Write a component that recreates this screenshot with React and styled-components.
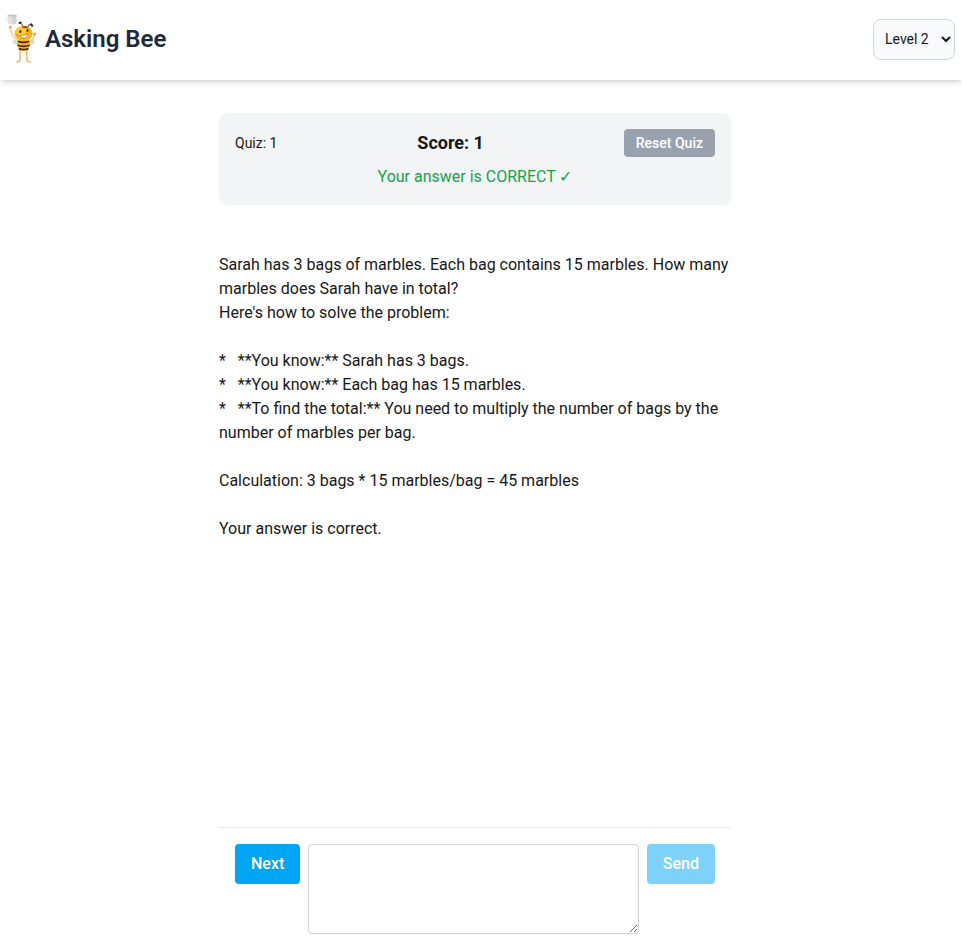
import React, { useState } from "react";
import styled, { createGlobalStyle, css } from "styled-components";

const GlobalStyle = createGlobalStyle`
  *, *::before, *::after { box-sizing: border-box; }
  body {
    margin: 0;
    background: #ffffff;
    color: #171717;
    font-family: Roboto, "Liberation Sans", sans-serif;
    font-size: 16px;
    line-height: 24px;
  }
  button, select, textarea { font: inherit; color: inherit; }
`;

const Page = styled.div`
  display: flex;
  flex-direction: column;
  min-height: 100vh;
`;

const Header = styled.header`
  display: flex;
  align-items: center;
  justify-content: space-between;
  height: 80px;
  padding: 0 7px 2px 4px;
  box-shadow: 0 4px 6px -1px rgba(0, 0, 0, 0.12), 0 2px 4px -2px rgba(0, 0, 0, 0.12);
`;

const Brand = styled.a`
  display: flex;
  align-items: center;
  gap: 8px;
  color: #1e2939;
  text-decoration: none;
`;

const BrandName = styled.h1`
  margin: 0;
  font-size: 24px;
  line-height: 32px;
  font-weight: 600;
`;

const LevelSelect = styled.select`
  width: 82px;
  height: 41px;
  padding: 0 7px;
  border: 1px solid #d1d5db;
  border-radius: 8px;
  background: #f9fafb;
  color: #101828;
  font-size: 14px;
`;

const Main = styled.main`
  display: flex;
  flex: 1;
  flex-direction: column;
  width: 100%;
  max-width: 524px;
  margin: 0 auto;
  padding: 33px 12px 12px 0;
`;

const ScoreCard = styled.section`
  display: flex;
  flex-direction: column;
  gap: 8px;
  padding: 16px;
  border-radius: 8px;
  background: #f3f4f6;
`;

const ScoreRow = styled.div`
  display: flex;
  align-items: center;
  justify-content: space-between;
`;

const QuizCount = styled.span`
  font-size: 14px;
`;

const Score = styled.span`
  font-size: 18px;
  line-height: 28px;
  font-weight: 700;
`;

const Verdict = styled.p`
  margin: 0;
  color: #16a34a;
  text-align: center;
`;

const Button = styled.button`
  flex: none;
  border: 0;
  border-radius: 4px;
  color: #ffffff;
  font-weight: 500;
  ${({ $small }) =>
    $small
      ? css`
          padding: 4px 12px;
          background: #99a1af;
          font-size: 14px;
          line-height: 20px;
        `
      : css`
          padding: 8px 16px;
          background: #00a6f4;
        `}
  &:disabled { opacity: 0.5; }
`;

const Answer = styled.p`
  flex: 1;
  margin: 48px 0 24px;
  white-space: pre-wrap;
`;

const Composer = styled.form`
  display: flex;
  align-items: flex-start;
  gap: 8px;
  padding: 16px 16px 0;
  border-top: 1px solid #e5e7eb;
`;

const MessageBox = styled.textarea`
  flex: 1;
  min-width: 0;
  height: 90px;
  padding: 8px;
  border: 1px solid #d1d5db;
  border-radius: 4px;
  background: #ffffff;
`;

const BeeSvg = styled.svg`
  display: block;
  flex: none;
`;

function Bee() {
  return (
    <BeeSvg width="33" height="50" viewBox="-1 0 33 50" aria-hidden="true">
      {/* cup */}
      <path d="M3.500 3H2.200Q1 3 1.200 5t2.300 3.200" fill="none" stroke="#e6e6e7" strokeWidth="1" />
      <path d="M2.600 1h9l-.3 8.400Q7.300 11.600 3.100 9.400z" fill="#e2e2e3" />
      <path d="M7.500 1.500h4.100l-.3 7.900q-1.800 1-3.800 1z" fill="#d2d2d4" />
      <ellipse cx="7.100" cy="1.500" rx="4.500" ry="1" fill="#bfc0c2" />
      {/* wings */}
      <ellipse cx="10.800" cy="28" rx="3.200" ry="2.300" fill="#d3e6bd" transform="rotate(20 10.800 28)" />
      <ellipse cx="27" cy="28" rx="2.800" ry="2.300" fill="#d3e6bd" transform="rotate(-20 27 28)" />
      {/* arms */}
      <path d="M12.500 26Q6 22 5.400 13.500" fill="none" stroke="#f7c678" strokeWidth="1.200" strokeLinecap="round" />
      <circle cx="5.300" cy="13" r="1.500" fill="#f3b052" />
      <path d="M25 27q4.500-1.500 4.200-7" fill="none" stroke="#f7c678" strokeWidth="1.200" strokeLinecap="round" />
      <circle cx="29.600" cy="20" r="1.500" fill="#ed9f43" />
      {/* legs */}
      <path d="M15.300 35.500l-.6 11.700-3 .9M21.600 35.500l.5 11.700 3 .9" fill="none" stroke="#f1ad55" strokeWidth="1.400" strokeLinecap="round" strokeLinejoin="round" />
      {/* striped body */}
      <ellipse cx="18.600" cy="30.300" rx="6.200" ry="6.700" fill="#f8b617" />
      <path d="M13 27.400q5.500 2 11.300-.2M12.400 31.200q6 2.200 12.400 0M13.700 34.600q5 1.800 9.800 0" fill="none" stroke="#4a2612" strokeWidth="1.700" />
      {/* antennae */}
      <path d="M18 13.500q0-3.500-2.500-4M23 13q0-2.800 2.700-2.500" fill="none" stroke="#493022" strokeWidth=".9" />
      <ellipse cx="15.200" cy="8.800" rx="1.700" ry="1.100" fill="#3c281f" transform="rotate(-20 15.200 8.800)" />
      <ellipse cx="26.600" cy="11" rx="2" ry="1.200" fill="#3c281f" transform="rotate(45 26.600 11)" />
      {/* head */}
      <ellipse cx="18.700" cy="19.500" rx="9" ry="7.600" fill="#f9b419" />
      <ellipse cx="16" cy="17.500" rx="5.500" ry="4.500" fill="#fdcb32" />
      <path d="M16.500 13.200q3.500-2 7 .1-3.500 1.500-7-.1z" fill="#633516" />
      <ellipse cx="15.400" cy="17.600" rx="1" ry="1.500" fill="#38220f" />
      <ellipse cx="22.500" cy="16.400" rx="1" ry="1.500" fill="#38220f" />
      <path d="M14.800 21.300q4.200 1 8-1.400-.5 4-3.600 4.200-3.200.1-4.400-2.800z" fill="#fff" stroke="#9d4b1c" strokeWidth=".5" />
      <circle cx="12.400" cy="21" r="1.100" fill="#f19736" />
      <circle cx="25.400" cy="19.500" r="1" fill="#f19736" />
    </BeeSvg>
  );
}

const transcript = `Sarah has 3 bags of marbles. Each bag contains 15 marbles. How many marbles does Sarah have in total?
Here's how to solve the problem:

*   **You know:** Sarah has 3 bags.
*   **You know:** Each bag has 15 marbles.
*   **To find the total:** You need to multiply the number of bags by the number of marbles per bag.

Calculation: 3 bags * 15 marbles/bag = 45 marbles

Your answer is correct.`;

export default function App() {
  const [level, setLevel] = useState("2");
  const [message, setMessage] = useState("");

  return (
    <>
      <GlobalStyle />
      <Page>
        <Header>
          <Brand href="#">
            <Bee />
            <BrandName>Asking Bee</BrandName>
          </Brand>
          <LevelSelect aria-label="Level" value={level} onChange={(e) => setLevel(e.target.value)}>
            <option value="1">Level 1</option>
            <option value="2">Level 2</option>
            <option value="3">Level 3</option>
          </LevelSelect>
        </Header>
        <Main>
          <ScoreCard>
            <ScoreRow>
              <QuizCount>Quiz: 1</QuizCount>
              <Score>Score: 1</Score>
              <Button type="button" $small>Reset Quiz</Button>
            </ScoreRow>
            <Verdict>Your answer is CORRECT ✓</Verdict>
          </ScoreCard>
          <Answer>{transcript}</Answer>
          <Composer onSubmit={(e) => e.preventDefault()}>
            <Button type="button">Next</Button>
            <MessageBox aria-label="Your answer" value={message} onChange={(e) => setMessage(e.target.value)} />
            <Button type="submit" disabled={message === ""}>Send</Button>
          </Composer>
        </Main>
      </Page>
    </>
  );
}
